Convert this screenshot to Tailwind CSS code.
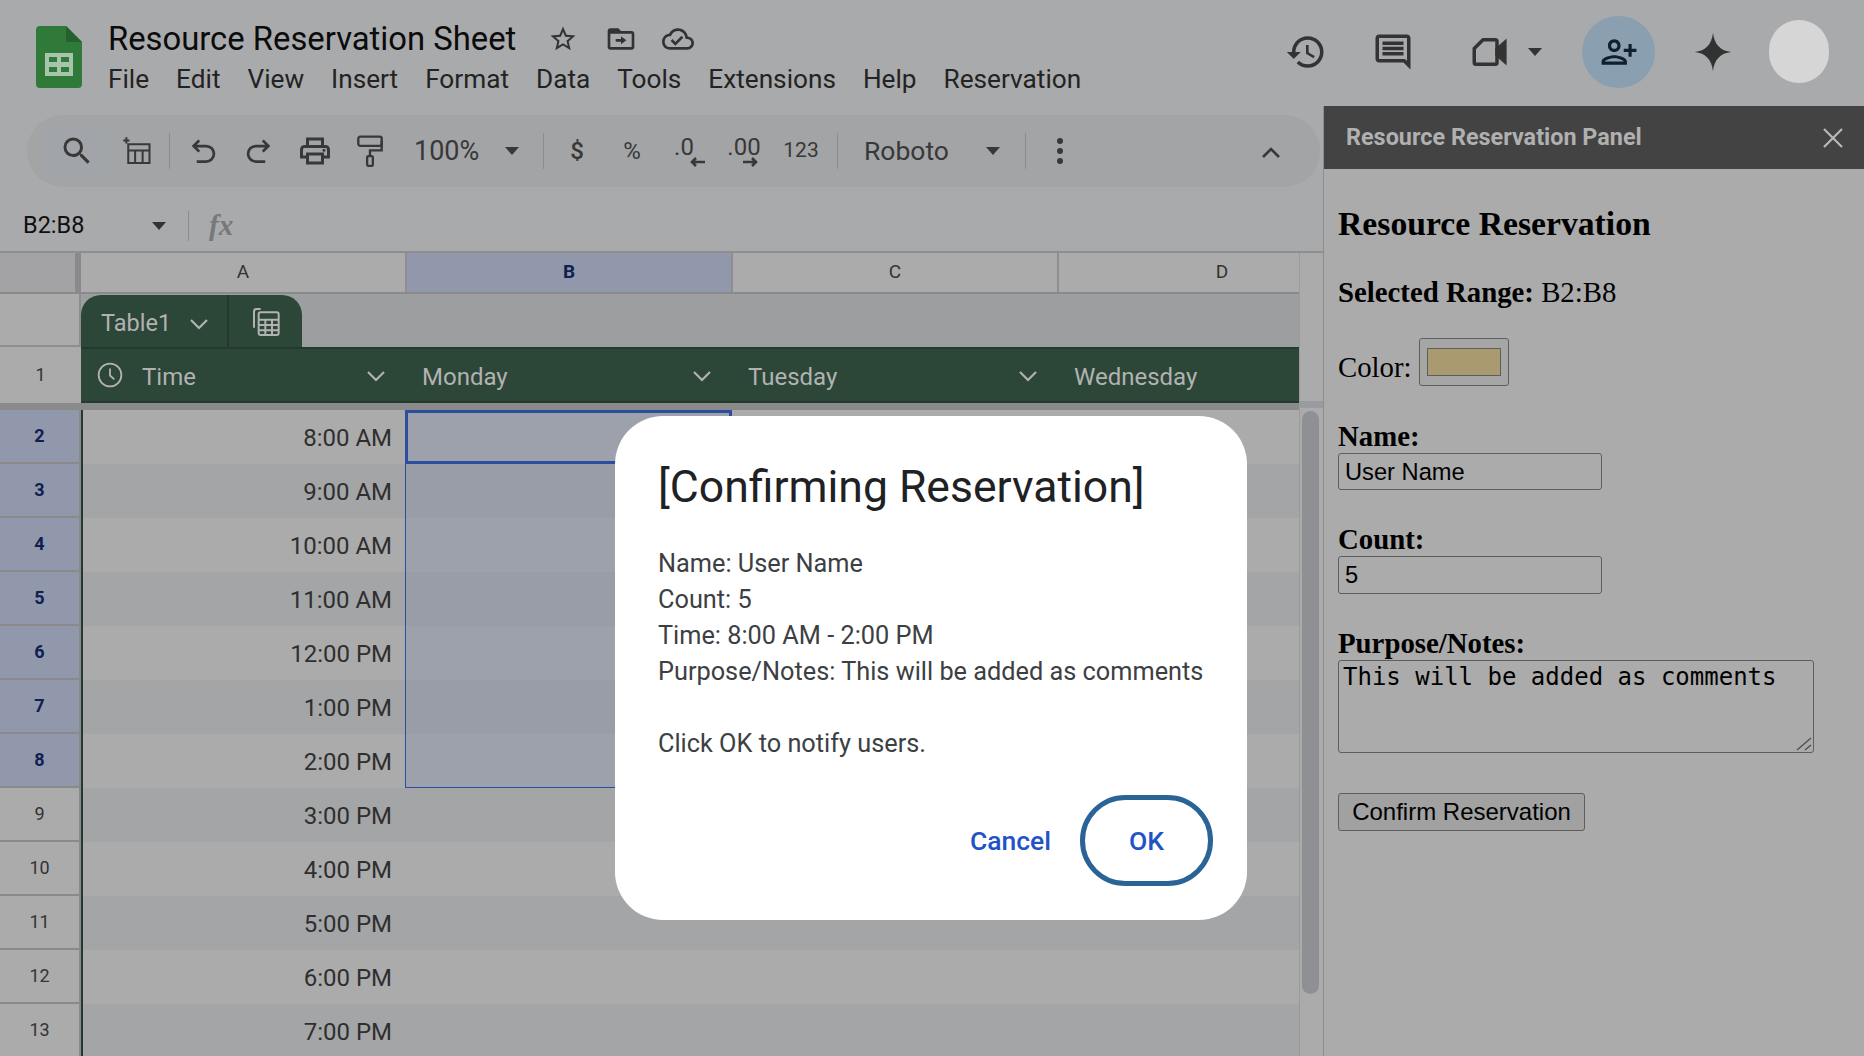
<!DOCTYPE html>
<html lang="en">
<head>
  <meta charset="UTF-8">
  <title>Resource Reservation Sheet</title>
  <script src="https://cdn.jsdelivr.net/npm/@tailwindcss/browser@4"></script>
</head>
<body class="bg-[#a9aaac] font-[Roboto,sans-serif]">
<div class="relative w-[1864px] h-[1056px] overflow-hidden">

  <!-- title bar -->
  <header class="flex h-[106px] items-start">
    <svg class="ml-[36px] mt-[26px] w-[46px] h-[62px] shrink-0" viewBox="0 0 46 62">
      <path d="M4 0H30L46 16V58a4 4 0 0 1-4 4H4a4 4 0 0 1-4-4V4a4 4 0 0 1 4-4z" fill="#2f7a39"/>
      <path d="M30 0L46 16H30z" fill="#25602e"/>
      <path d="M9 27H37V50H9zM13 31V36H21V31zM25 31V36H33V31zM13 41V46H21V41zM25 41V46H33V41z" fill="#a9c4ac" fill-rule="evenodd"/>
    </svg>
    <div class="ml-[26px] pt-[19px]">
      <div class="flex items-center h-[40px]">
        <span class="text-[32.8px] pt-[2px] text-[#0b0b0b] w-[408px] whitespace-nowrap">Resource Reservation Sheet</span>
        <svg class="ml-[32px] w-[30px] h-[30px]" viewBox="0 0 24 24" fill="#333"><path d="M22 9.24l-7.19-.62L12 2 9.19 8.63 2 9.24l5.46 4.73L5.82 21 12 17.27 18.18 21l-1.63-7.03L22 9.24zM12 15.4l-3.76 2.27 1-4.28-3.32-2.88 4.38-.38L12 6.1l1.71 4.04 4.38.38-3.32 2.88 1 4.28L12 15.4z"/></svg>
        <svg class="ml-[27px] w-[32px] h-[32px]" viewBox="0 0 24 24" fill="#333"><path d="M20 6h-8l-2-2H4c-1.1 0-2 .9-2 2v12c0 1.1.9 2 2 2h16c1.1 0 2-.9 2-2V8c0-1.1-.9-2-2-2zm0 12H4V8h16v10zm-8-2l4-3-4-3v2H8v2h4v2z"/></svg>
        <svg class="ml-[25px] w-[32px] h-[32px]" viewBox="0 0 24 24" fill="#333"><path d="M19.35 10.04C18.67 6.59 15.64 4 12 4 9.11 4 6.6 5.64 5.35 8.04 2.34 8.36 0 10.91 0 14c0 3.31 2.69 6 6 6h13c2.76 0 5-2.24 5-5 0-2.64-2.05-4.78-4.65-4.96zM19 18H6c-2.21 0-4-1.79-4-4 0-2.05 1.53-3.76 3.56-3.97l1.07-.11.5-.95C8.08 7.14 9.94 6 12 6c2.62 0 4.88 1.86 5.39 4.43l.3 1.5 1.53.11c1.56.1 2.78 1.41 2.78 2.96 0 1.65-1.35 3-3 3zm-9-3.82l-2.09-2.09L6.5 13.5 10 17l6.01-6.01-1.41-1.41z"/></svg>
      </div>
      <nav class="flex items-center h-[40px] pt-[2px] gap-[27px] text-[26.2px] text-[#232323] whitespace-nowrap">
        <span>File</span><span>Edit</span><span>View</span><span>Insert</span><span>Format</span><span>Data</span><span>Tools</span><span>Extensions</span><span>Help</span><span>Reservation</span>
      </nav>
    </div>

    <div class="ml-auto mr-[35px] h-[104px] flex items-center">
      <svg class="w-[42px] h-[42px]" viewBox="0 0 24 24" fill="#333"><path d="M13 3a9 9 0 0 0-9 9H1l3.89 3.89.07.14L9 12H6c0-3.87 3.13-7 7-7s7 3.13 7 7-3.13 7-7 7c-1.93 0-3.68-.79-4.94-2.06l-1.42 1.42A8.954 8.954 0 0 0 13 21a9 9 0 0 0 0-18zm-1 5v5l4.28 2.54.72-1.21-3.5-2.08V8H12z"/></svg>
      <svg class="ml-[45px] w-[42px] h-[42px]" viewBox="0 0 24 24" fill="#333"><path d="M20 2H4c-1.1 0-2 .9-2 2v12c0 1.1.9 2 2 2h14l4 4V4c0-1.1-.9-2-2-2zm0 15.17L18.83 16H4V4h16v13.17zM6 12h12v2H6zm0-3h12v2H6zm0-3h12v2H6z"/></svg>
      <svg class="ml-[55px] w-[42px] h-[42px]" viewBox="0 0 24 24" fill="none" stroke="#333" stroke-width="2"><path d="M8 5H15a1 1 0 0 1 1 1V18a1 1 0 0 1-1 1H4a1 1 0 0 1-1-1V10z" stroke-linejoin="round"/><path d="M16 10.5L20.5 6.5V17.5L16 13.5z" fill="#333"/></svg>
      <svg class="ml-[17px] w-[14px] h-[8px]" viewBox="0 0 14 8" fill="#333"><path d="M0 0H14L7 8z"/></svg>
      <div class="ml-[40px] w-[73px] h-[72px] rounded-full bg-[#8a9fb0] flex items-center justify-center">
        <svg class="w-[38px] h-[38px] -scale-x-100" viewBox="0 0 24 24" fill="#10202e"><path d="M15 12c2.21 0 4-1.79 4-4s-1.79-4-4-4-4 1.79-4 4 1.79 4 4 4zm0-6c1.1 0 2 .9 2 2s-.9 2-2 2-2-.9-2-2 .9-2 2-2zm0 8c-2.67 0-8 1.34-8 4v2h16v-2c0-2.66-5.33-4-8-4zm-6 4c.22-.72 3.31-2 6-2 2.7 0 5.8 1.29 6 2H9zm-3-3v-3h3v-2H6V7H4v3H1v2h3v3h2z"/></svg>
      </div>
      <svg class="ml-[36px] w-[44px] h-[44px]" viewBox="0 0 24 24" fill="#2f3331"><path d="M12 1.5C12.7 8 16 11.3 22 12 16 12.7 12.7 16 12 22.500 11.300 16 8 12.700 2 12 8 11.300 11.300 8 12 1.500Z"/></svg>
      <div class="ml-[34px] w-[60px] h-[63px] rounded-full bg-[#d6d6d6] mb-[2px]"></div>
    </div>
  </header>

  <div class="flex h-[950px]">
    <!-- sheet side -->
    <div class="w-[1323px] shrink-0 flex flex-col">
      <div class="pt-[9px] pl-[27px] h-[95px]">
        <div class="w-[1293px] h-[72px] rounded-[36px] bg-[#a3a4a6] flex items-center pl-[16px] text-[#383838]">
          <div class="w-[67px] h-[49px] bg-[#a1a5a9] flex items-center justify-center">
            <svg class="w-[36px] h-[36px]" viewBox="0 0 24 24" fill="#383838"><path d="M15.5 14h-.79l-.28-.27A6.471 6.471 0 0 0 16 9.5 6.5 6.500 0 1 0 9.500 16c1.610 0 3.090-.59 4.230-1.570l.27.28v.79l5 4.990L20.490 19l-4.990-5zm-6 0C7.010 14 5 11.990 5 9.500S7.010 5 9.500 5 14 7.010 14 9.500 11.990 14 9.500 14z"/></svg>
          </div>
          <div class="w-[54px] flex justify-center">
            <svg class="w-[30px] h-[30px]" viewBox="0 0 24 24" fill="none" stroke="#383838" stroke-width="1.600"><path d="M5 6.500H22V21.500H5zM5 11.500H22M10.500 11.500V21.500M16.500 11.500V21.500"/><path d="M3.500 1V6M1 3.500H6"/></svg>
          </div>
          <div class="ml-[5px] w-px h-[36px] bg-[#8c8d8f]"></div>
          <div class="w-[66px] flex justify-center">
            <svg class="w-[30px] h-[30px]" viewBox="0 0 24 24" fill="none" stroke="#383838" stroke-width="2.200"><path d="M9 3.500L4.500 8 9 12.500M4.500 8H14.500a6 6 0 0 1 0 12.500H7"/></svg>
          </div>
          <div class="w-[46px] flex justify-center">
            <svg class="w-[30px] h-[30px] -scale-x-100" viewBox="0 0 24 24" fill="none" stroke="#383838" stroke-width="2.200"><path d="M9 3.500L4.500 8 9 12.500M4.500 8H14.500a6 6 0 0 1 0 12.500H7"/></svg>
          </div>
          <div class="w-[66px] flex justify-center">
            <svg class="w-[36px] h-[36px]" viewBox="0 0 24 24" fill="#383838"><path d="M19 8h-1V3H6v5H5c-1.660 0-3 1.340-3 3v6h4v4h12v-4h4v-6c0-1.660-1.340-3-3-3zM8 5h8v3H8V5zm8 12v2H8v-4h8v2zm2-2v-2H6v2H4v-4c0-.55.45-1 1-1h14c.55 0 1 .45 1 1v4h-2z"/><circle cx="18" cy="11.500" r="1"/></svg>
          </div>
          <div class="w-[44px] flex justify-center">
            <svg class="w-[26px] h-[36px]" viewBox="0 0 20 24" fill="none" stroke="#383838" stroke-width="1.800"><rect x="1" y="1" width="18" height="7" rx="1.500"/><path d="M19 4.500V11.500H10V16"/><rect x="7.800" y="16" width="4.400" height="7.500" rx="1"/></svg>
          </div>
          <span class="ml-[22px] w-[66px] text-[27px] whitespace-nowrap">100%</span>
          <div class="w-[63px] flex justify-center">
            <svg class="w-[14px] h-[8px]" viewBox="0 0 14 8" fill="#383838"><path d="M0 0H14L7 8z"/></svg>
          </div>
          <div class="w-px h-[36px] bg-[#8c8d8f]"></div>
          <span class="w-[66px] text-center text-[24px] font-medium">$</span>
          <span class="w-[44px] text-center text-[24px]">%</span>
          <div class="w-[66px] flex flex-col items-center">
            <span class="text-[24px] leading-[24px] -ml-[6px]">.0</span>
            <svg class="w-[16px] h-[10px] ml-[22px] -mt-[2px]" viewBox="0 0 16 10" fill="none" stroke="#383838" stroke-width="2.600"><path d="M15 5H2M6 1L2 5 6 9"/></svg>
          </div>
          <div class="w-[48px] flex flex-col items-center">
            <span class="text-[24px] leading-[24px]">.00</span>
            <svg class="w-[16px] h-[10px] ml-[12px] -mt-[2px]" viewBox="0 0 16 10" fill="none" stroke="#383838" stroke-width="2.600"><path d="M1 5H14M10 1L14 5 10 9"/></svg>
          </div>
          <span class="w-[66px] text-center text-[21px]">123</span>
          <div class="ml-[3px] w-px h-[36px] bg-[#8c8d8f]"></div>
          <span class="ml-[26px] w-[86px] text-[26.5px]">Roboto</span>
          <div class="w-[75px] pl-[36px]">
            <svg class="w-[14px] h-[8px]" viewBox="0 0 14 8" fill="#383838"><path d="M0 0H14L7 8z"/></svg>
          </div>
          <div class="w-px h-[36px] bg-[#8c8d8f]"></div>
          <div class="w-[68px] flex flex-col items-center gap-[4px]">
            <span class="w-[6px] h-[6px] rounded-full bg-[#383838]"></span>
            <span class="w-[6px] h-[6px] rounded-full bg-[#383838]"></span>
            <span class="w-[6px] h-[6px] rounded-full bg-[#383838]"></span>
          </div>
          <svg class="ml-auto mr-[37px] w-[24px] h-[14px] mt-[2px]" viewBox="0 0 24 14" fill="none" stroke="#383838" stroke-width="2.600"><path d="M4 12L12 4 20 12"/></svg>
        </div>
      </div>

      <!-- formula bar -->
      <div class="h-[52px] flex items-center bg-[#a9aaac] border-b-2 border-[#8e8e8e]">
        <span class="ml-[23px] w-[129px] text-[23.5px] text-[#101010]">B2:B8</span>
        <svg class="w-[14px] h-[8px]" viewBox="0 0 14 8" fill="#333"><path d="M0 0H14L7 8z"/></svg>
        <div class="ml-[22px] w-px h-[30px] bg-[#8c8d8f]"></div>
        <span class="ml-[20px] font-['Liberation_Serif',serif] italic font-bold text-[29px] text-[#77787a]">fx</span>
      </div>

      <!-- grid -->
      <div class="flex flex-1 min-h-0">
        <div class="w-[1299px] shrink-0 flex flex-col overflow-hidden">
          <div class="flex h-[41px] shrink-0 text-[19px] text-[#333] border-b-2 border-[#8a8a8a]">
            <div class="w-[75px] shrink-0 bg-[#a3a3a5]"></div>
            <div class="w-[6px] shrink-0 bg-[#8a8a8a]"></div>
            <div class="w-[326px] shrink-0 bg-[#ababab] border-r-2 border-[#8e8e8e] flex items-center justify-center">A</div>
            <div class="w-[326px] shrink-0 bg-[#9198ab] border-r-2 border-[#8e8e8e] flex items-center justify-center font-bold text-[#10204f]">B</div>
            <div class="w-[326px] shrink-0 bg-[#ababab] border-r-2 border-[#8e8e8e] flex items-center justify-center">C</div>
            <div class="w-[326px] shrink-0 bg-[#ababab] flex items-center justify-center">D</div>
          </div>
          <div class="flex h-[53px] shrink-0">
            <div class="w-[81px] bg-[#ababab] border-r-2 border-[#8e8e8e] border-b-2"></div>
            <div class="flex-1 bg-[#9d9ea0] flex items-end">
              <div class="w-[221px] h-[52px] rounded-t-[20px] bg-[#2c4638] flex text-[#b2b2b2]">
                <div class="w-[148px] border-r-2 border-[#233a2e] flex items-center pl-[20px]">
                  <span class="text-[23.5px] pt-[5px]">Table1</span>
                  <svg class="ml-[18px] w-[20px] h-[12px] mt-[5px]" viewBox="0 0 20 12" fill="none" stroke="#b2b2b2" stroke-width="2.200"><path d="M2 2L10 10 18 2"/></svg>
                </div>
                <div class="flex-1 flex items-center justify-center">
                  <svg class="w-[32px] h-[32px]" viewBox="0 0 24 24" fill="none" stroke="#b2b2b2" stroke-width="1.500"><path d="M8 3H5a2 2 0 0 0-2 2V17"/><rect x="6.500" y="5.500" width="15" height="17" rx="1.500"/><path d="M6.500 11H21.500M6.500 15H21.500M6.500 19H21.500M11.500 11V22.500M16.500 11V22.500"/></svg>
                </div>
              </div>
            </div>
          </div>
          <div class="flex h-[56px] shrink-0">
            <div class="w-[81px] bg-[#ababab] flex items-center justify-center pb-[2px] text-[18px] text-[#333]">1</div>
            <div class="flex-1 bg-[#2c4638] border-y-2 border-[#233a2e] flex items-center pt-[4px] text-[24px] text-[#b2b2b2]">
              <div class="w-[325px] flex items-center pl-[16px]">
                <svg class="w-[26px] h-[26px] -mt-[4px]" viewBox="0 0 24 24" fill="none" stroke="#b2b2b2" stroke-width="1.700"><circle cx="12" cy="12" r="10.500"/><path d="M12 6V12.500L16 16"/></svg>
                <span class="ml-[19px]">Time</span>
                <svg class="ml-auto mr-[20px] w-[20px] h-[12px] -mt-[2px]" viewBox="0 0 20 12" fill="none" stroke="#b2b2b2" stroke-width="2.200"><path d="M2 2L10 10 18 2"/></svg>
              </div>
              <div class="w-[326px] flex items-center pl-[16px]">
                <span>Monday</span>
                <svg class="ml-auto mr-[20px] w-[20px] h-[12px] -mt-[2px]" viewBox="0 0 20 12" fill="none" stroke="#b2b2b2" stroke-width="2.200"><path d="M2 2L10 10 18 2"/></svg>
              </div>
              <div class="w-[326px] flex items-center pl-[16px]">
                <span>Tuesday</span>
                <svg class="ml-auto mr-[20px] w-[20px] h-[12px] -mt-[2px]" viewBox="0 0 20 12" fill="none" stroke="#b2b2b2" stroke-width="2.200"><path d="M2 2L10 10 18 2"/></svg>
              </div>
              <div class="flex-1 pl-[16px]">Wednesday</div>
            </div>
          </div>
          <div class="h-[7px] shrink-0 bg-[#8a8a8a]"></div>
          <div id="rows"></div>
        </div>

        <!-- scrollbar -->
        <div class="flex-1 border-l border-[#9a9a9a] bg-[#ababab] flex flex-col pl-[2px]">
          <div class="h-[157px] -ml-[2px] flex flex-col justify-end">
            <div class="h-[7px] bg-[#9a9ba0] mb-[2px]"></div>
          </div>
          <div class="mt-[1px] w-[17px] h-[583px] rounded-full bg-[#8f9094]"></div>
        </div>
      </div>
    </div>

    <!-- side panel -->
    <aside class="flex-1 border-l border-[#8e8e8e] bg-[#ababab] flex flex-col">
      <div class="h-[63px] bg-[#434343] flex items-center pl-[22px] pr-[20px]">
        <span class="text-[23.4px] font-bold text-[#b0b0b0]">Resource Reservation Panel</span>
        <svg class="ml-auto w-[22px] h-[22px]" viewBox="0 0 22 22" fill="none" stroke="#b8b8b8" stroke-width="2.200"><path d="M2 2L20 20M20 2L2 20"/></svg>
      </div>
      <div class="pl-[14px] pt-[35px] font-['Liberation_Serif',serif] text-[28.8px] text-black">
        <h1 class="text-[33.7px] font-bold leading-[40px]">Resource Reservation</h1>
        <p class="mt-[31px] leading-[34px]"><b>Selected Range:</b> B2:B8</p>
        <div class="mt-[29px] flex items-end">
          <span class="w-[81px] leading-[34px] mb-[2px]">Color:</span>
          <div class="w-[90px] h-[48px] rounded-[3px] border border-[#5e5e5e] bg-[#a6a6a6] flex items-center justify-center">
            <div class="w-[74px] h-[28px] border border-[#5e5e5e] bg-[#a99b6f]"></div>
          </div>
        </div>
        <label class="block mt-[33px] font-bold leading-[34px]">Name:</label>
        <input class="block w-[264px] h-[37px] rounded-[3px] border border-[#5e5e5e] px-[6px] pt-[2px] bg-transparent font-['Liberation_Sans',sans-serif] text-[23.7px] text-black" value="User Name">
        <label class="block mt-[32px] font-bold leading-[34px]">Count:</label>
        <input class="block w-[264px] h-[38px] rounded-[3px] border border-[#5e5e5e] px-[6px] bg-transparent font-['Liberation_Sans',sans-serif] text-[23.7px] text-black" value="5">
        <label class="block mt-[32px] font-bold leading-[34px]">Purpose/Notes:</label>
        <div class="relative w-[476px] h-[93px]">
          <textarea class="block w-full h-full resize-none rounded-[3px] border border-[#5e5e5e] px-[4px] py-[2px] bg-transparent font-['DejaVu_Sans_Mono',monospace] text-[24px] leading-[28px] text-black">This will be added as comments</textarea>
          <svg class="absolute right-[2px] bottom-[2px] w-[16px] h-[14px]" viewBox="0 0 16 14" fill="none" stroke="#4a4a4a" stroke-width="1.200"><path d="M1 13L15 1M9 13L15 8"/></svg>
        </div>
        <button class="block mt-[40px] w-[247px] h-[38px] rounded-[3px] border border-[#5e5e5e] bg-[#a1a1a1] font-['Liberation_Sans',sans-serif] text-[24px] leading-none text-black">Confirm Reservation</button>
      </div>
    </aside>
  </div>

  <!-- dialog -->
  <div class="absolute left-[615px] top-[416px] w-[632px] h-[504px] rounded-[48px] bg-white pt-[46px] pl-[43px] pr-[34px]">
    <h2 class="text-[44.5px] leading-[50px] text-[#202124] whitespace-nowrap">[Confirming Reservation]</h2>
    <div class="mt-[34px] text-[25.3px] leading-[36px] text-[#3c4043] whitespace-nowrap">
      <p>Name: User Name</p>
      <p>Count: 5</p>
      <p>Time: 8:00 AM - 2:00 PM</p>
      <p>Purpose/Notes: This will be added as comments</p>
      <p class="mt-[36px]">Click OK to notify users.</p>
    </div>
    <div class="mt-[33px] flex items-center justify-end gap-[29px] text-[26.5px] font-medium text-[#2152c8]">
      <button>Cancel</button>
      <button class="w-[133px] h-[91px] rounded-[46px] border-[5px] border-[#2a6496]">OK</button>
    </div>
  </div>
</div>

<script>
  const times = ['8:00 AM','9:00 AM','10:00 AM','11:00 AM','12:00 PM','1:00 PM','2:00 PM','3:00 PM','4:00 PM','5:00 PM','6:00 PM','7:00 PM'];
  const rows = document.getElementById('rows');

  times.forEach((time, i) => {
    const num = i + 2;
    const selected = num <= 8;
    const zebra = i % 2 === 0 ? 'bg-[#ababab]' : 'bg-[#a4a5a7]';
    const cellFill = i % 2 === 0 ? 'bg-[#9da1ab]' : 'bg-[#999da8]';
    let bCell = zebra;
    if (num === 2) bCell = cellFill + ' border-[3px] border-[#2b4f9e]';
    else if (num === 8) bCell = cellFill + ' border-x border-b border-[#2b4f9e]';
    else if (selected) bCell = cellFill + ' border-x border-[#2b4f9e]';

    const row = document.createElement('div');
    row.className = 'flex h-[54px]';
    row.innerHTML = `
      <div class="w-[81px] border-r-2 border-b-2 border-[#8a8a8a] flex items-center justify-center pb-[2px] text-[18px] ${selected ? 'bg-[#9198ab] font-bold text-[#10204f]' : 'bg-[#ababab] text-[#333]'}">${num}</div>
      <div class="w-[2px] bg-[#233a2e]"></div>
      <div class="w-[322px] ${zebra} flex items-center justify-end pr-[13px] pt-[2px] text-[24px] text-[#2f2f2f]">${time}</div>
      <div class="w-[327px] ${bCell}"></div>
      <div class="flex-1 ${zebra}"></div>`;
    rows.appendChild(row);
  });
</script>
</body>
</html>
